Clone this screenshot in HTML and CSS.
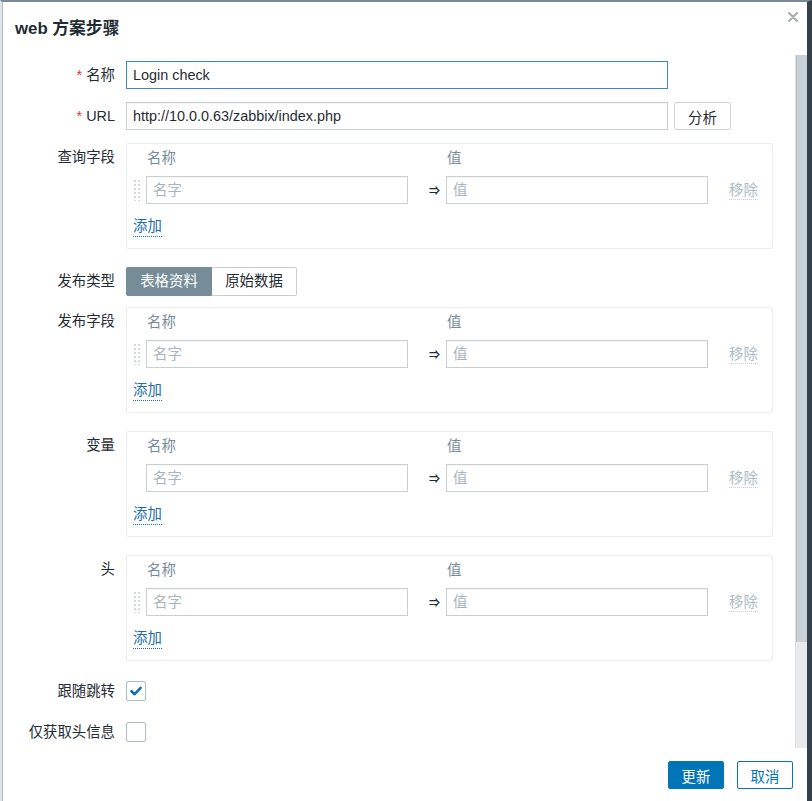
FILE: index.html
```html
<!DOCTYPE html>
<html lang="zh-CN">
<head>
<meta charset="utf-8">
<title>web 方案步骤</title>
<link rel="stylesheet" href="styles.css">
</head>
<body>
<div class="frame">
  <div class="dialog">
    <div class="head">
      <h4 class="title">web 方案步骤</h4>
      <button class="close" type="button" aria-label="关闭">
        <svg width="10" height="10" viewBox="0 0 10 10"><path d="M1 1L9 9M9 1L1 9" stroke="#a3acb2" stroke-width="2" stroke-linecap="round"/></svg>
      </button>
    </div>
    <div class="scroll-area">
      <form class="form">
        <div class="row">
          <label class="lbl"><span class="req">*</span> 名称</label>
          <div class="field"><input class="text focus" type="text" value="Login check"></div>
        </div>
        <div class="row">
          <label class="lbl"><span class="req">*</span> URL</label>
          <div class="field inline"><input class="text" type="text" value="http://10.0.0.63/zabbix/index.php"><button class="btn-grey" type="button">分析</button></div>
        </div>
        <div class="row boxrow">
          <label class="lbl">查询字段</label>
          <div class="field">
            <div class="box">
              <div class="grid">
                <span></span><span class="th">名称</span><span></span><span class="th">值</span><span></span>
                <span class="drag"></span><input class="text" type="text" placeholder="名字"><span class="arrow">⇒</span><input class="text" type="text" placeholder="值"><span class="remove">移除</span>
              </div>
              <a class="add" href="#">添加</a>
            </div>
          </div>
        </div>
        <div class="row segrow">
          <label class="lbl">发布类型</label>
          <div class="field"><div class="seg"><span class="seg-btn on">表格资料</span><span class="seg-btn">原始数据</span></div></div>
        </div>
        <div class="row boxrow">
          <label class="lbl">发布字段</label>
          <div class="field">
            <div class="box">
              <div class="grid">
                <span></span><span class="th">名称</span><span></span><span class="th">值</span><span></span>
                <span class="drag"></span><input class="text" type="text" placeholder="名字"><span class="arrow">⇒</span><input class="text" type="text" placeholder="值"><span class="remove">移除</span>
              </div>
              <a class="add" href="#">添加</a>
            </div>
          </div>
        </div>
        <div class="row boxrow">
          <label class="lbl">变量</label>
          <div class="field">
            <div class="box">
              <div class="grid">
                <span></span><span class="th">名称</span><span></span><span class="th">值</span><span></span>
                <span></span><input class="text" type="text" placeholder="名字"><span class="arrow">⇒</span><input class="text" type="text" placeholder="值"><span class="remove">移除</span>
              </div>
              <a class="add" href="#">添加</a>
            </div>
          </div>
        </div>
        <div class="row boxrow">
          <label class="lbl">头</label>
          <div class="field">
            <div class="box">
              <div class="grid">
                <span></span><span class="th">名称</span><span></span><span class="th">值</span><span></span>
                <span class="drag"></span><input class="text" type="text" placeholder="名字"><span class="arrow">⇒</span><input class="text" type="text" placeholder="值"><span class="remove">移除</span>
              </div>
              <a class="add" href="#">添加</a>
            </div>
          </div>
        </div>
        <div class="row cbrow">
          <label class="lbl">跟随跳转</label>
          <div class="field"><span class="cb"><svg width="18" height="18" viewBox="0 0 18 18"><path d="M4.5 9.2L7.6 12.2L13.6 5.8" fill="none" stroke="#0f6fae" stroke-width="2.6" stroke-linecap="round" stroke-linejoin="round"/></svg></span></div>
        </div>
        <div class="row cbrow">
          <label class="lbl">仅获取头信息</label>
          <div class="field"><span class="cb"></span></div>
        </div>
      </form>
      <div class="scrollbar"><div class="thumb"></div></div>
    </div>
    <div class="footer">
      <button class="btn primary" type="button">更新</button>
      <button class="btn alt" type="button">取消</button>
    </div>
  </div>
</div>
</body>
</html>
```
FILE: styles.css
```css
* { box-sizing: border-box; }
html, body { margin: 0; padding: 0; background: #ffffff; }
body {
  font-family: "Liberation Sans", Arial, "Noto Sans CJK SC", sans-serif;
  font-size: 14.4px;
  color: #1f2c33;
}
.frame {
  width: 812px;
  height: 801px;
  border-top: 2px solid #7b8994;
  border-left: 2px solid #dfe4e8;
  border-right: 5px solid #34414b;
  background: #fff;
  overflow: hidden;
}
.dialog {
  height: 799px;
  border-left: 1px solid #b4bcc2;
  display: flex;
  flex-direction: column;
}
.head {
  height: 53px;
  display: flex;
  justify-content: space-between;
  align-items: flex-start;
  padding: 15px 8px 0 12px;
}
.title {
  margin: 0;
  font-size: 16.8px;
  font-weight: bold;
  line-height: 24px;
  color: #1f2c33;
}
.close {
  border: 0;
  background: none;
  padding: 0;
  margin-top: -6px;
  width: 12px;
  height: 12px;
  display: flex;
  align-items: center;
  justify-content: center;
}
.scroll-area {
  height: 693px;
  display: flex;
}
.form {
  flex: 1;
  padding-top: 6px;
  display: flex;
  flex-direction: column;
  gap: 13px;
  overflow: hidden;
}
.scrollbar {
  width: 12px;
  background: #e9eaeb;
  border-left: 1px solid #dcdfe1;
}
.thumb {
  height: 587px;
  background: #c9d1d7;
  border-left: 1px solid #b9c2c9;
}
.row {
  display: grid;
  grid-template-columns: 112px 647px;
  column-gap: 11px;
  align-items: start;
}
.boxrow { margin-bottom: 5px; }
.segrow { margin-bottom: -2px; }
.lbl {
  text-align: right;
  line-height: 28px;
  white-space: nowrap;
}
.cbrow .lbl { line-height: 24px; }
.req { color: #e33734; }
.field { min-height: 28px; }
.inline { display: flex; gap: 6px; }
.text {
  width: 542px;
  height: 28px;
  border: 1px solid #c9cfd3;
  border-radius: 0;
  padding: 0 6px;
  font: inherit;
  font-size: 14.4px;
  color: #1f2c33;
  background: #fff;
  box-shadow: inset 0 1px 1px rgba(0,0,0,0.04);
  outline: none;
}
.text.focus { border-color: #3d89bc; }
.text::placeholder { color: #a9b4bb; }
.btn-grey {
  width: 57px;
  height: 28px;
  border: 1px solid #cfd5d9;
  border-radius: 2px;
  background: #fff;
  font: inherit;
  font-size: 14.4px;
  color: #1f2c33;
  padding: 0;
}
.box {
  width: 647px;
  border: 1px solid #ebeef0;
  border-radius: 2px;
  padding: 0 0 7px 6px;
}
.grid {
  display: grid;
  grid-template-columns: 13px 262px 38px 262px 1fr;
  grid-template-rows: 28px 28px;
  row-gap: 4px;
  align-items: center;
}
.grid .text { width: 262px; }
.th { color: #768d99; padding-left: 1px; line-height: 28px; }
.arrow {
  text-align: right;
  padding-right: 6px;
  font-size: 11px;
  font-weight: bold;
  color: #1f2c33;
}
.drag {
  align-self: stretch;
  margin: 3px 0 3px 0;
  width: 8px;
  background-image: radial-gradient(circle, #d2d8dc 1px, transparent 1.2px);
  background-size: 4px 4px;
}
.remove {
  color: #acbbc2;
  justify-self: start;
  border-bottom: 1px dotted #c5ced3;
  margin-left: 21px;
  line-height: 18px;
}
.add {
  display: inline-block;
  margin-top: 12px;
  line-height: 20px;
  color: #1a6fa8;
  text-decoration: none;
  border-bottom: 1px dotted #1a6fa8;
  margin-bottom: 4px;
}
.seg {
  display: inline-flex;
  height: 29px;
}
.seg-btn {
  width: 86px;
  line-height: 27px;
  text-align: center;
  border: 1px solid #c6ced3;
  background: #fff;
  color: #1f2c33;
}
.seg-btn:first-child { border-radius: 2px 0 0 2px; }
.seg-btn:last-child { border-radius: 0 2px 2px 0; border-left: 0; width: 85px; }
.seg-btn.on { background: #768d99; border-color: #768d99; color: #fff; }
.row .cb {
  display: flex;
  align-items: center;
  justify-content: center;
  width: 20px;
  height: 20px;
  margin-top: 2px;
  border: 1px solid #acbbc4;
  border-radius: 2px;
  background: #fff;
}
.footer {
  height: 53px;
  display: flex;
  justify-content: flex-end;
  align-items: flex-start;
  gap: 13px;
  padding: 13px 14px 0 0;
}
.btn {
  width: 56px;
  height: 28px;
  border-radius: 2px;
  font: inherit;
  font-size: 14.4px;
  padding: 0;
}
.btn.primary { background: #0275b8; border: 1px solid #0275b8; color: #fff; }
.btn.alt { background: #fff; border: 1px solid #0275b8; color: #0275b8; }
```
